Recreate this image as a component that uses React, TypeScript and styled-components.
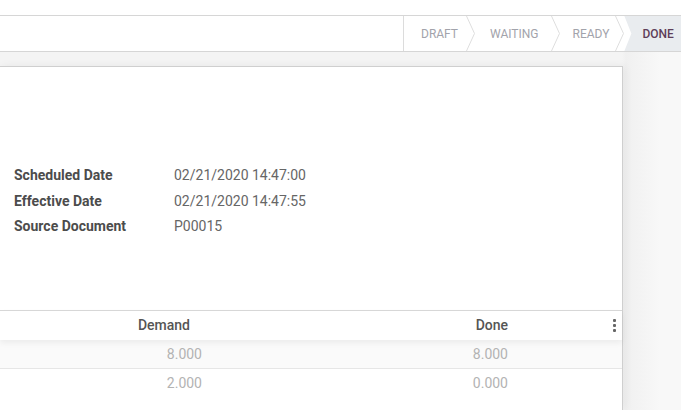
import React from "react";
import styled, { createGlobalStyle } from "styled-components";

const GlobalStyle = createGlobalStyle`
  html, body {
    margin: 0;
    padding: 0;
    background: #f7f7f7;
    font-family: Roboto, "Noto Sans", sans-serif;
    overflow: hidden;
  }
`;

const Page = styled.div`
  width: 681px;
  height: 410px;
  display: flex;
  flex-direction: column;
  overflow: hidden;
`;

const ControlPanel = styled.div`
  height: 15px;
  background: #ffffff;
`;

const StatusRow = styled.div`
  height: 35px;
  display: flex;
  background: #ffffff;
  border-top: 1px solid #d6d6d6;
  border-bottom: 1px solid #d6d6d6;
  overflow: hidden;
`;

const ButtonArea = styled.div`
  flex: 0 0 404px;
  border-right: 1px solid #dcdcdc;
  box-sizing: border-box;
`;

const Stages = styled.div`
  display: flex;
  align-items: stretch;
`;

const Stage = styled.div<{ $active?: boolean; $pl: number; $pr: number }>`
  position: relative;
  display: flex;
  align-items: center;
  padding: 0 ${(p) => p.$pr}px 0 ${(p) => p.$pl}px;
  font-size: 12px;
  font-weight: ${(p) => (p.$active ? 500 : 400)};
  color: ${(p) => (p.$active ? "#5e3e59" : "#a2a3ab")};
  background: ${(p) => (p.$active ? "#e9ecef" : "transparent")};
  clip-path: ${(p) =>
    p.$active ? "polygon(0 0, 100% 0, 100% 100%, 0 100%, 7px 50%)" : "none"};
  white-space: nowrap;
`;

const Chevron = styled.svg`
  position: absolute;
  right: 0;
  top: 0;
  width: 9px;
  height: 35px;
`;

const FormArea = styled.div`
  flex: 1;
  padding-top: 14px;
  background: linear-gradient(to right, #f4f4f4 0, #f4f4f4 622px, #f0f0f0 626px, #f8f8f8 660px);
`;

const Sheet = styled.div`
  width: 623px;
  height: 100%;
  box-sizing: border-box;
  background: #ffffff;
  border: 1px solid #cfcfcf;
  border-left: none;
  border-bottom: none;
  box-shadow: 2px 0 8px rgba(0, 0, 0, 0.06);
  padding-top: 96px;
`;

const FieldGroup = styled.div`
  display: grid;
  grid-template-columns: 160px 1fr;
  padding-left: 14px;
`;

const Label = styled.div`
  font-size: 14px;
  font-weight: 700;
  color: #4c4c4c;
  line-height: 25.5px;
`;

const Value = styled.div`
  font-size: 14px;
  color: #666666;
  line-height: 25.5px;
`;

const Table = styled.div`
  margin-top: 70px;
  border-top: 1px solid #d8d8d8;
`;

const HeadRow = styled.div`
  display: grid;
  grid-template-columns: 206px 310px 1fr;
  height: 29px;
  align-items: center;
  position: relative;
  z-index: 1;
  background: #ffffff;
  box-shadow: 0 3px 6px rgba(0, 0, 0, 0.06);
`;

const HeadCell = styled.div<{ $pr: number }>`
  text-align: right;
  padding-right: ${(p) => p.$pr}px;
  font-size: 14px;
  font-weight: 500;
  color: #555555;
`;

const Row = styled.div<{ $shade?: boolean }>`
  display: grid;
  grid-template-columns: 206px 310px 1fr;
  height: 28px;
  align-items: center;
  background: ${(p) => (p.$shade ? "#fafafa" : "#ffffff")};
  border-bottom: 1px solid ${(p) => (p.$shade ? "#e6e6e6" : "transparent")};
`;

const NumCell = styled.div<{ $pr: number }>`
  text-align: right;
  padding-right: ${(p) => p.$pr}px;
  font-size: 14px;
  color: #b3b3b3;
`;

const Dots = styled.div`
  display: flex;
  flex-direction: column;
  align-items: flex-end;
  gap: 2px;
  padding-right: 6px;

  & span {
    width: 3px;
    height: 3px;
    background: #666;
    border-radius: 1px;
  }
`;

const stages = [
  { name: "DRAFT", pl: 17, pr: 17 },
  { name: "WAITING", pl: 15, pr: 21 },
  { name: "READY", pl: 13, pr: 15 },
];

const fields = [
  ["Scheduled Date", "02/21/2020 14:47:00"],
  ["Effective Date", "02/21/2020 14:47:55"],
  ["Source Document", "P00015"],
];

const lines = [
  ["8.000", "8.000"],
  ["2.000", "0.000"],
];

export default function App() {
  return (
    <Page>
      <GlobalStyle />
      <ControlPanel />
      <StatusRow>
        <ButtonArea />
        <Stages>
          {stages.map((s) => (
            <Stage key={s.name} $pl={s.pl} $pr={s.pr}>
              {s.name}
              <Chevron viewBox="0 0 9 35" preserveAspectRatio="none">
                <polyline points="0.5,0 8.5,17.5 0.5,35" fill="none" stroke="#dedede" strokeWidth="1" />
              </Chevron>
            </Stage>
          ))}
          <Stage $active $pl={18} $pr={18}>
            DONE
          </Stage>
        </Stages>
      </StatusRow>
      <FormArea>
        <Sheet>
          <FieldGroup>
            {fields.map(([l, v]) => (
              <React.Fragment key={l}>
                <Label>{l}</Label>
                <Value>{v}</Value>
              </React.Fragment>
            ))}
          </FieldGroup>
          <Table>
            <HeadRow>
              <HeadCell $pr={16}>Demand</HeadCell>
              <HeadCell $pr={8}>Done</HeadCell>
              <Dots>
                <span />
                <span />
                <span />
              </Dots>
            </HeadRow>
            {lines.map(([d, dn], i) => (
              <Row key={i} $shade={i === 0}>
                <NumCell $pr={4}>{d}</NumCell>
                <NumCell $pr={8}>{dn}</NumCell>
                <div />
              </Row>
            ))}
          </Table>
        </Sheet>
      </FormArea>
    </Page>
  );
}
